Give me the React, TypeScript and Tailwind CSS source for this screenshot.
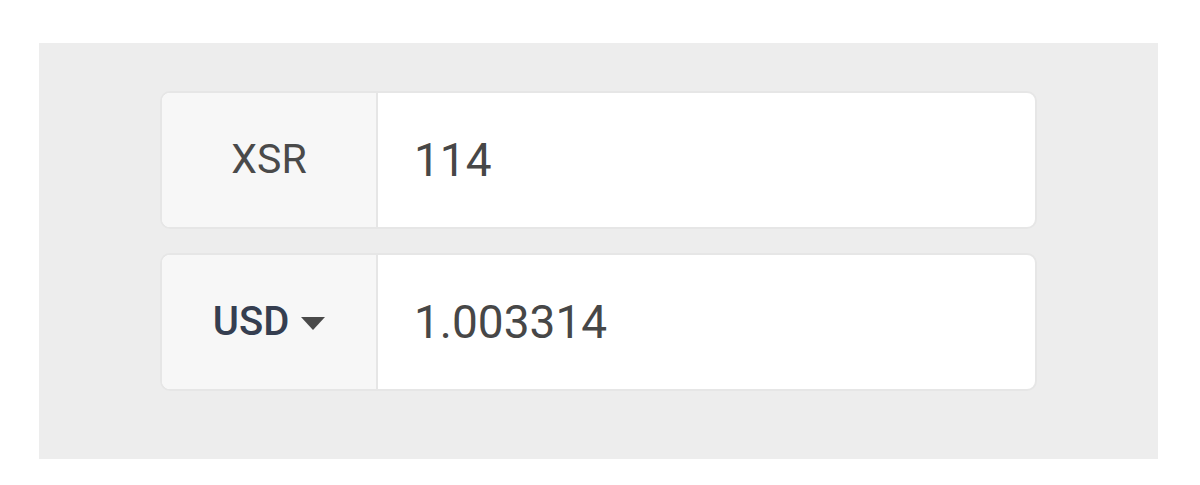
import { useState } from "react";

// Currency converter: fixed XSR row on top, selectable fiat row below.
function Row({
  label,
  value,
}: {
  label: React.ReactNode;
  value: string;
}) {
  return (
    <div className="flex h-[138px] rounded-[10px] border-2 border-[#e6e6e6] bg-white overflow-hidden">
      <div className="w-[216px] shrink-0 flex items-center justify-center bg-[#f7f7f7] border-r-2 border-[#e6e6e6]">
        {label}
      </div>
      <div className="flex-1 flex items-center pl-[36px] text-[46px] text-[#474747]">
        {value}
      </div>
    </div>
  );
}

export default function App() {
  const [xsr] = useState("114");
  const [usd] = useState("1.003314");

  return (
    <div
      className="w-[1200px] h-[485px] bg-white pt-[43px] pl-[39px]"
      style={{ fontFamily: "Roboto, 'Liberation Sans', sans-serif" }}
    >
      <div className="w-[1119px] h-[416px] bg-[#ededed] pt-[48px] px-[121px] flex flex-col gap-[24px]">
        <Row
          label={<span className="text-[41px] text-[#4a4a4a]">XSR</span>}
          value={xsr}
        />
        <Row
          label={
            <button className="flex items-center gap-[12px] text-[40px] font-medium text-[#353e50]">
              USD
              <svg width="24" height="13" viewBox="0 0 24 13" className="mt-[2px]">
                <path d="M0 0 L24 0 L12 13 Z" fill="#4a4a4a" />
              </svg>
            </button>
          }
          value={usd}
        />
      </div>
    </div>
  );
}
